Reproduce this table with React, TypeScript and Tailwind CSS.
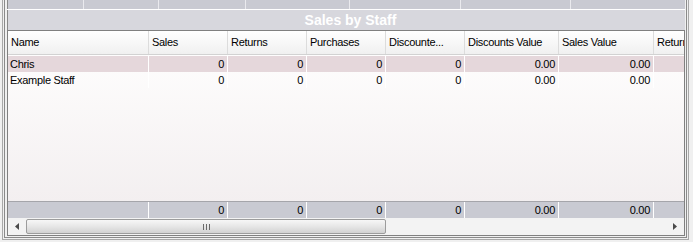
import React from "react";

const cols = [
  { label: "Name", w: "w-[141px]" },
  { label: "Sales", w: "w-[79px]" },
  { label: "Returns", w: "w-[79px]" },
  { label: "Purchases", w: "w-[79px]" },
  { label: "Discounte...", w: "w-[79px]" },
  { label: "Discounts Value", w: "w-[94px]" },
  { label: "Sales Value", w: "w-[95px]" },
  { label: "Returns", w: "w-[60px]" },
];

const rows = [
  { name: "Chris", vals: ["0", "0", "0", "0", "0.00", "0.00", ""], selected: true },
  { name: "Example Staff", vals: ["0", "0", "0", "0", "0.00", "0.00", ""], selected: false },
];

const totals = ["0", "0", "0", "0", "0.00", "0.00", ""];

const topCells = ["w-[76px]", "w-[75px]", "w-[87px]", "w-[104px]", "w-[111px]", "w-[110px]"];

export default function App() {
  return (
    <div className="h-[242px] w-[693px] overflow-hidden bg-[#f0f0f0] font-['Liberation_Sans',Arial,sans-serif] text-[11px] tracking-[-0.3px] text-black">
      {/* outer frames */}
      <div className="ml-[2px] mr-[4px] h-[240px] border-x border-b border-[#a8a8a8] pb-[1px] pl-[1px] pr-[1px]">
        <div className="flex h-full flex-col border-x border-b border-[#8a8a8a] pb-[1px] pl-[2px] pr-[1px]">
          {/* top strip */}
          <div className="flex h-[9px] shrink-0 border-l border-[#8a8a8a] bg-[#c9cad2]">
            {topCells.map((w, i) => (
              <div key={i} className={`${w} h-full border-r border-[#eaeaee]`} />
            ))}
            <div className="flex-1" />
          </div>
          <div className="h-px shrink-0 bg-white" />
          {/* title */}
          <div className="flex h-[20px] shrink-0 items-center justify-center border-l border-[#8a8a8a] bg-[#d7d7dd] pl-[8px] text-[14px] font-bold tracking-normal text-white">
            Sales by Staff
          </div>
          {/* grid */}
          <div className="flex min-h-0 flex-1 flex-col overflow-hidden border border-[#808080]">
            {/* header */}
            <div className="flex h-[24px] shrink-0 border-b border-[#d2d2d2] bg-gradient-to-b from-white to-[#f0f0f0]">
              {cols.map((c, i) => (
                <div
                  key={i}
                  className={`${c.w} flex shrink-0 items-center overflow-hidden whitespace-nowrap border-r border-[#dcdcdc] pl-[3px]`}
                >
                  {c.label}
                </div>
              ))}
            </div>
            {/* rows + empty area */}
            <div className="flex flex-1 flex-col bg-gradient-to-b from-[#fefdfd] to-[#f3eff0] pt-px">
              {rows.map((r, i) => (
                <div key={i} className={`flex h-[16px] shrink-0 ${r.selected ? "bg-[#e5d7db]" : ""}`}>
                  <div className="flex w-[141px] shrink-0 items-center border-r border-white pl-[2px]">{r.name}</div>
                  {r.vals.map((v, j) => (
                    <div
                      key={j}
                      className={`${cols[j + 1].w} flex shrink-0 items-center justify-end border-r border-white pr-[3px]`}
                    >
                      {v}
                    </div>
                  ))}
                </div>
              ))}
            </div>
            {/* totals */}
            <div className="flex h-[17px] shrink-0 border-t border-[#a5a5aa] bg-[#c9cad2]">
              <div className="w-[141px] shrink-0 border-r border-white" />
              {totals.map((v, j) => (
                <div
                  key={j}
                  className={`${cols[j + 1].w} flex shrink-0 items-center justify-end border-r border-white pr-[3px]`}
                >
                  {v}
                </div>
              ))}
            </div>
            {/* horizontal scrollbar */}
            <div className="flex h-[17px] shrink-0 items-center bg-[#f3f3f3]">
              <div className="flex w-[18px] shrink-0 items-center justify-center">
                <svg width="4" height="7" viewBox="0 0 4 7">
                  <path d="M4 0 L0 3.5 L4 7 Z" fill="#4a4a4a" />
                </svg>
              </div>
              <div className="flex h-[15px] w-[360px] shrink-0 items-center justify-center rounded-[2px] border border-[#9c9c9c] bg-gradient-to-b from-[#f7f7f7] via-[#e6e6e6] to-[#d2d2d2]">
                <svg width="7" height="6" viewBox="0 0 7 6">
                  <path d="M0.5 0 V6 M3.5 0 V6 M6.5 0 V6" stroke="#6a6a6a" strokeWidth="1" />
                </svg>
              </div>
              <div className="flex-1" />
              <div className="flex w-[18px] shrink-0 items-center justify-center">
                <svg width="4" height="7" viewBox="0 0 4 7">
                  <path d="M0 0 L4 3.5 L0 7 Z" fill="#4a4a4a" />
                </svg>
              </div>
            </div>
          </div>
        </div>
      </div>
    </div>
  );
}
